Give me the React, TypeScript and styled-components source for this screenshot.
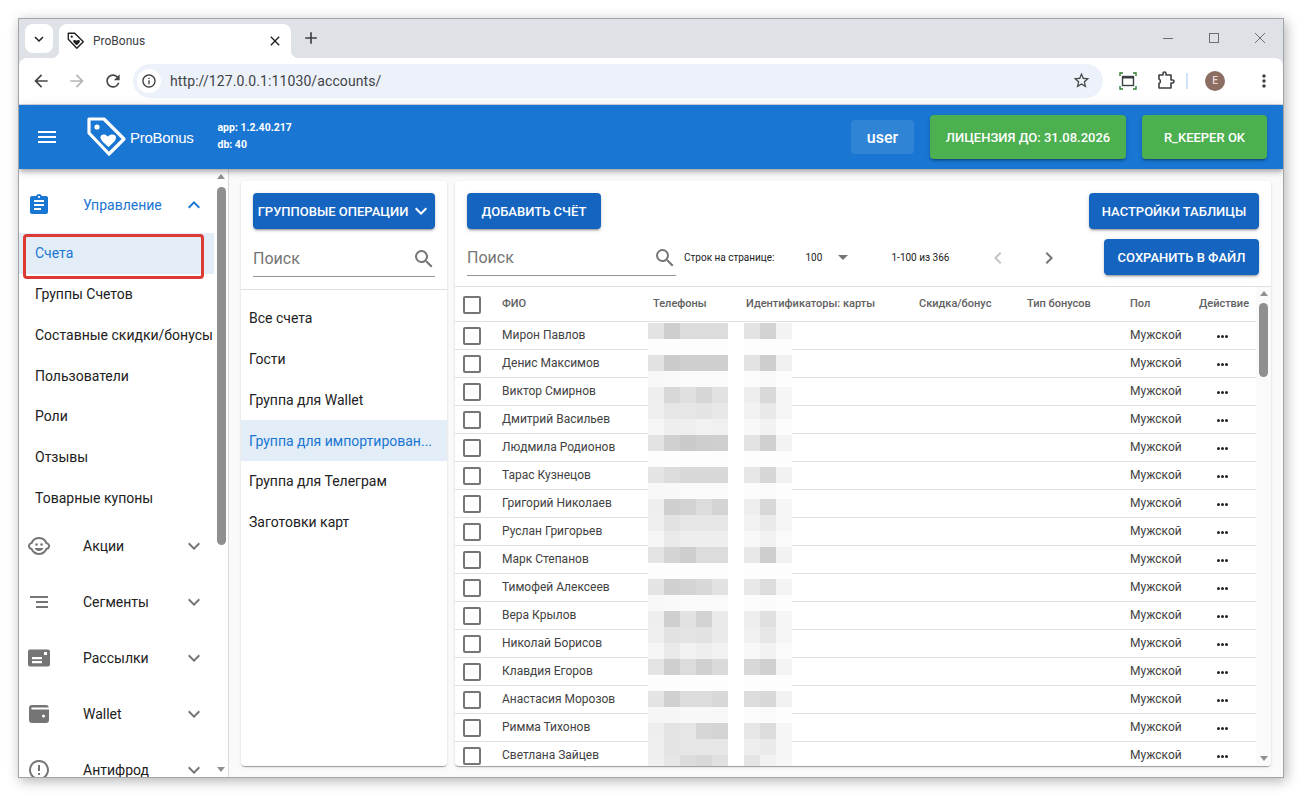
import React from 'react';
import styled, { createGlobalStyle } from 'styled-components';
import {
  MdAssignment, MdExpandLess, MdExpandMore, MdChildCare, MdSegment, MdErrorOutline,
  MdSearch, MdArrowDropDown, MdChevronLeft, MdChevronRight, MdMenu, MdRefresh,
  MdArrowBack, MdArrowForward, MdKeyboardArrowDown, MdClose, MdAdd, MdInfoOutline, MdStarBorder,
  MdMoreVert,
} from 'react-icons/md';

const GlobalStyle = createGlobalStyle`
  html, body { margin: 0; padding: 0; background: #fff; }
  body { font-family: Roboto, "Liberation Sans", Arial, sans-serif; overflow: hidden; }
  * { box-sizing: border-box; }
`;

const Page = styled.div`
  width: 1303px;
  height: 800px;
  padding: 18px 0 0 18px;
`;

const Window = styled.div`
  width: 1266px;
  height: 760px;
  border: 1px solid #a2a4a7;
  box-shadow: 2px 3px 12px rgba(0, 0, 0, 0.3);
  display: flex;
  flex-direction: column;
  overflow: hidden;
  background: #fff;
`;

/* browser frame */
const TabStrip = styled.div`
  height: 39px;
  flex: none;
  background: #dee1e6;
  display: flex;
  align-items: flex-start;
  padding: 5px 0 0 6px;
`;

const TabList = styled.div`
  width: 28px;
  height: 29px;
  background: #fff;
  border-radius: 8px;
  display: flex;
  align-items: center;
  justify-content: center;
  color: #1f1f1f;
  font-size: 18px;
`;

const Tab = styled.div`
  position: relative;
  width: 232px;
  height: 34px;
  margin-left: 6px;
  background: #fff;
  border-radius: 8px 8px 0 0;
  display: flex;
  align-items: center;
  padding: 0 8px;
  font-size: 12px;
  color: #3c4043;
  &::before, &::after {
    content: '';
    position: absolute;
    bottom: 0;
    width: 8px;
    height: 8px;
  }
  &::before { left: -8px; background: radial-gradient(circle at 0 0, transparent 8px, #fff 8.5px); }
  &::after { right: -8px; background: radial-gradient(circle at 100% 0, transparent 8px, #fff 8.5px); }
`;

const TabTitle = styled.span`
  flex: 1;
  margin-left: 8px;
`;

const NewTab = styled.div`
  margin-left: 8px;
  height: 28px;
  width: 24px;
  display: flex;
  align-items: center;
  justify-content: center;
  font-size: 20px;
  color: #3c4043;
`;

const WindowControls = styled.div`
  margin-left: auto;
  display: flex;
  align-items: center;
  height: 28px;
  margin-right: 0;
`;

const WinControl = styled.div`
  width: 46px;
  height: 28px;
  display: flex;
  align-items: center;
  justify-content: center;
`;

const Toolbar = styled.div`
  height: 47px;
  flex: none;
  background: #dee1e6;
`;

const ToolbarInner = styled.div`
  height: 47px;
  background: #fff;
  border-radius: 8px 8px 0 0;
  border-bottom: 1px solid #d6d8dc;
  display: flex;
  align-items: center;
  padding: 0 9px 1px 0;
`;

const NavButton = styled.div<{ $off?: boolean }>`
  width: 36px;
  height: 36px;
  display: flex;
  align-items: center;
  justify-content: center;
  font-size: 20px;
  color: ${p => (p.$off ? '#b3b5b8' : '#474747')};
`;

const NavButtons = styled.div`
  display: flex;
  padding-left: 4px;
`;

const Omnibox = styled.div`
  width: 970px;
  height: 34px;
  margin-left: 2px;
  background: #edf2fa;
  border-radius: 17px;
  display: flex;
  align-items: center;
  padding: 0 12px 0 4px;
  font-size: 14px;
  color: #3f4347;
  letter-spacing: 0.1px;
`;

const InfoDot = styled.div`
  width: 24px;
  height: 24px;
  border-radius: 50%;
  background: #fff;
  display: flex;
  align-items: center;
  justify-content: center;
  font-size: 16px;
  color: #3c4043;
  margin-right: 9px;
`;

const Star = styled.div`
  margin-left: auto;
  display: flex;
  font-size: 19px;
  color: #474747;
`;

const ToolbarIcons = styled.div`
  flex: 1;
  display: flex;
  align-items: center;
  padding-left: 14px;
`;

const ToolIcon = styled.svg`
  width: 22px;
  height: 22px;
  margin-right: 15px;
  flex: none;
`;

const ToolSep = styled.div`
  width: 2px;
  height: 16px;
  background: #d3e3fd;
  margin: 0 0 0 -5px;
`;

const Avatar = styled.div`
  width: 20px;
  height: 20px;
  border-radius: 50%;
  background: #8d6e63;
  color: #e8dcd8;
  font-size: 10px;
  font-weight: 500;
  display: flex;
  align-items: center;
  justify-content: center;
  margin-left: 17px;
`;

const MoreButton = styled.div`
  display: flex;
  font-size: 20px;
  color: #3c4043;
  margin-left: auto;
`;

/* app bar */
const AppBar = styled.header`
  position: relative;
  z-index: 2;
  height: 64px;
  flex: none;
  background: #1976d2;
  color: #fff;
  display: flex;
  align-items: center;
  padding: 0 16px 0 16px;
  box-shadow: 0 2px 4px -1px rgba(0,0,0,.2), 0 4px 5px 0 rgba(0,0,0,.14), 0 1px 10px 0 rgba(0,0,0,.12);
`;

const Burger = styled.div`
  display: flex;
  font-size: 24px;
`;

const LogoMark = styled.svg`
  width: 42px;
  height: 42px;
  margin-left: 27px;
  flex: none;
`;

const Brand = styled.div`
  font-family: "Liberation Sans", Arial, sans-serif;
  font-size: 15px;
  margin-left: 2px;
  letter-spacing: -0.3px;
`;

const Versions = styled.div`
  margin-left: 24px;
  font-size: 10.5px;
  font-weight: 700;
  line-height: 17px;
  margin-top: -2px;
`;

const UserBadge = styled.div`
  margin-left: auto;
  width: 63px;
  height: 34px;
  border-radius: 4px;
  background: rgba(255, 255, 255, 0.1);
  display: flex;
  align-items: center;
  justify-content: center;
  font-size: 16px;
  font-weight: 500;
`;

const GreenButton = styled.div<{ $w: number }>`
  width: ${p => p.$w}px;
  height: 44px;
  margin-left: 16px;
  border-radius: 4px;
  background: #4caf50;
  display: flex;
  align-items: center;
  justify-content: center;
  font-size: 13px;
  font-weight: 500;
  box-shadow: 0 3px 1px -2px rgba(0,0,0,.2), 0 2px 2px 0 rgba(0,0,0,.14), 0 1px 5px 0 rgba(0,0,0,.12);
`;

/* body */
const Body = styled.div`
  flex: 1;
  min-height: 0;
  display: flex;
  background: #fafafa;
`;

const Sidebar = styled.aside`
  width: 210px;
  flex: none;
  background: #fff;
  border-right: 1px solid #d9d9d9;
  display: flex;
  overflow: hidden;
`;

const NavList = styled.nav`
  flex: 1;
  min-width: 0;
  padding-top: 8px;
  overflow: hidden;
`;

const NavGroup = styled.div<{ $open?: boolean }>`
  height: 56px;
  display: flex;
  align-items: center;
  padding-left: 8px;
  font-size: 14px;
  color: ${p => (p.$open ? '#1976d2' : '#212121')};
`;

const NavIcon = styled.div<{ $open?: boolean }>`
  width: 24px;
  height: 24px;
  display: flex;
  font-size: 24px;
  color: ${p => (p.$open ? '#1976d2' : '#757575')};
  svg { width: 24px; height: 24px; }
`;

const NavLabel = styled.span`
  margin-left: 32px;
  flex: 1;
`;

const NavChevron = styled.div<{ $open?: boolean }>`
  display: flex;
  font-size: 24px;
  margin-right: 8px;
  color: ${p => (p.$open ? '#1976d2' : '#757575')};
`;

const NavItem = styled.div<{ $active?: boolean }>`
  position: relative;
  height: 40.75px;
  display: flex;
  align-items: center;
  padding-left: 16px;
  font-size: 14px;
  white-space: nowrap;
  color: ${p => (p.$active ? '#1976d2' : '#212121')};
  background: ${p => (p.$active ? '#e3edf7' : 'transparent')};
  ${p => p.$active && `
    &::after {
      content: '';
      position: absolute;
      left: 4px;
      top: 1px;
      width: 175px;
      height: 39px;
      border: 3px solid #dd3a33;
      border-radius: 4px;
    }
  `}
`;

const Rail = styled.div<{ $w: number; $bg?: string }>`
  width: ${p => p.$w}px;
  flex: none;
  position: relative;
  background: ${p => p.$bg || '#fff'};
  display: flex;
  flex-direction: column;
  align-items: center;
`;

const RailArrow = styled.div<{ $down?: boolean; $h: number }>`
  height: ${p => p.$h}px;
  width: 100%;
  flex: none;
  display: flex;
  align-items: ${p => (p.$down ? 'flex-start' : 'flex-end')};
  justify-content: center;
  &::before {
    content: '';
    border-left: 4.5px solid transparent;
    border-right: 4.5px solid transparent;
    ${p => (p.$down ? 'border-top' : 'border-bottom')}: 5px solid #909090;
  }
`;

const RailThumb = styled.div<{ $h: number; $mt: number }>`
  width: 9px;
  height: ${p => p.$h}px;
  margin-top: ${p => p.$mt}px;
  border-radius: 5px;
  background: #8f8f8f;
  flex: none;
`;

const RailFill = styled.div`
  flex: 1;
`;

const Content = styled.main`
  flex: 1;
  min-width: 0;
  display: flex;
  gap: 8px;
  padding: 12px 12px 11px 12px;
`;

const Panel = styled.section<{ $w?: number }>`
  ${p => (p.$w ? `width: ${p.$w}px; flex: none;` : 'flex: 1; min-width: 0;')}
  background: #fff;
  border-radius: 4px;
  box-shadow: 0 2px 1px -1px rgba(0,0,0,.2), 0 1px 1px 0 rgba(0,0,0,.14), 0 1px 3px 0 rgba(0,0,0,.12);
  display: flex;
  flex-direction: column;
  overflow: hidden;
`;

const GroupHead = styled.div`
  padding: 12px 12px 0;
  height: 109px;
  border-bottom: 1px solid #e0e0e0;
  flex: none;
`;

const BlueButton = styled.div<{ $w: number }>`
  width: ${p => p.$w}px;
  height: 36px;
  flex: none;
  border-radius: 4px;
  background: #1565c0;
  color: #fff;
  display: flex;
  align-items: center;
  justify-content: center;
  font-size: 13px;
  font-weight: 500;
  white-space: nowrap;
  box-shadow: 0 3px 1px -2px rgba(0,0,0,.2), 0 2px 2px 0 rgba(0,0,0,.14), 0 1px 5px 0 rgba(0,0,0,.12);
  svg { font-size: 24px; margin-left: 1px; margin-right: -3px; }
`;

const SearchField = styled.div<{ $w: number; $mt: number }>`
  width: ${p => p.$w}px;
  height: 36px;
  margin-top: ${p => p.$mt}px;
  flex: none;
  border-bottom: 1px solid #949494;
  display: flex;
  align-items: center;
  justify-content: space-between;
  font-size: 16px;
  color: #757575;
  svg { font-size: 24px; margin-right: -1px; }
`;

const GroupList = styled.div`
  padding-top: 8px;
`;

const GroupItem = styled.div<{ $active?: boolean }>`
  height: 40.75px;
  padding: 0 8px;
  display: flex;
  align-items: center;
  font-size: 14px;
  color: ${p => (p.$active ? '#1976d2' : '#212121')};
  background: ${p => (p.$active ? '#e3edf7' : 'transparent')};
`;

const TableHead = styled.div`
  flex: none;
  height: 106px;
  padding: 12px 12px 0;
  border-bottom: 1px solid #e0e0e0;
  display: flex;
  flex-direction: column;
`;

const HeadRow = styled.div`
  display: flex;
  align-items: flex-start;
  justify-content: space-between;
`;

const PagerRow = styled.div`
  display: flex;
  align-items: flex-start;
  margin-top: 11px;
`;

const PagerText = styled.span<{ $ml: number }>`
  font-size: 10px;
  color: #212121;
  margin-left: ${p => p.$ml}px;
  line-height: 35px;
  white-space: nowrap;
`;

const PageSelect = styled.div`
  width: 51px;
  height: 34px;
  margin-left: 31px;
  display: flex;
  align-items: center;
  justify-content: space-between;
  font-size: 10px;
  color: #212121;
  svg { font-size: 24px; color: #757575; margin-right: 2px; }
`;

const PagerArrow = styled.div<{ $off?: boolean; $ml: number }>`
  display: flex;
  font-size: 24px;
  margin-left: ${p => p.$ml}px;
  margin-top: 6px;
  color: ${p => (p.$off ? '#c4c4c4' : '#757575')};
`;

const PushRight = styled.div`
  margin-left: auto;
  margin-top: -1px;
`;

const TableWrap = styled.div`
  flex: 1;
  min-height: 0;
  display: flex;
  overflow: hidden;
`;

const Table = styled.div`
  position: relative;
  flex: 1;
  min-width: 0;
  overflow: hidden;
`;

const Row = styled.div<{ $head?: boolean }>`
  display: grid;
  grid-template-columns: 47px 151px 93px 173px 108px 103px 69px 1fr;
  align-items: center;
  height: ${p => (p.$head ? '35px' : '28px')};
  border-bottom: 1px solid #e0e0e0;
`;

const Check = styled.div`
  width: 18px;
  height: 18px;
  margin-left: 8px;
  border: 2px solid #757575;
  border-radius: 2px;
  background: #fff;
  margin-top: 1px;
`;

const HeadCell = styled.div`
  font-size: 11px;
  font-weight: 500;
  color: #616161;
  white-space: nowrap;
  padding-bottom: 2px;
`;

const Cell = styled.div`
  font-size: 12px;
  color: #424242;
  white-space: nowrap;
  margin-top: -1px;
`;

const Dots = styled.div`
  display: flex;
  gap: 1px;
  justify-content: flex-start;
  margin-left: 18px;
  margin-top: 2px;
`;

const Dot = styled.i`
  width: 3px;
  height: 3px;
  border-radius: 50%;
  background: #212121;
`;

const Mosaic = styled.svg`
  position: absolute;
  left: 193px;
  top: 36px;
  display: block;
`;

const shades = [
  'e3cddcdcdc.e3d3f3', 'fdfdfdfdfd.fdfdfd', 'e2cbcfcfcf.e3cdf0', 'f8f9fbfbfb.fcf9fd',
  'eed8e0d6e2.eed9f6', 'efe6e6e4e8.f2e9f6', 'f6eeeff2f0.f8f2fc', 'e3d0cacdcf.e3d0f3',
  'fdfdfdfdfd.fdfdfd', 'e4dcd8d8d8.e6d6f2', 'f8f8fafafa.fcfafd', 'eecfd2dcd4.eed8f6',
  'efe2e6e6e6.f2eaf6', 'f6eaeeeeee.f8f2fa', 'e4d4cedcdc.e8cef2', 'fdfdfdfdfd.fdfdfd',
  'e4d0d4d8e2.e8dcf4', 'f8f9fafafa.fcfafd', 'eecfe2d2ea.eee0f6', 'efe2e4e2ea.f0e6f6',
  'f6eaf2eef2.f8f2fa', 'e4cfdcd0da.d8d0f4', 'fdfdfdfdfd.fdfdfd', 'e4d0dcdcd8.dcd8f2',
  'f6f6f8f8f8.fcfafd', 'eee4e6d6d4.e6dcf6', 'efe4e6e6e6.eeeaf6', 'f0e6dcd8e0.e4f2f6',
];

const Redaction = () => (
  <Mosaic width={144} height={448} shapeRendering="crispEdges">
    <rect width={144} height={448} fill="#fff" />
    {shades.map((line, y) => {
      const [left, right] = line.split('.');
      const cells: React.ReactNode[] = [];
      for (let i = 0; i < 5; i++) {
        cells.push(<rect key={`l${i}`} x={i * 16} y={y * 16} width={16} height={16} fill={`#${left.slice(i * 2, i * 2 + 2).repeat(3)}`} />);
      }
      for (let i = 0; i < 3; i++) {
        cells.push(<rect key={`r${i}`} x={96 + i * 16} y={y * 16} width={16} height={16} fill={`#${right.slice(i * 2, i * 2 + 2).repeat(3)}`} />);
      }
      return <g key={y}>{cells}</g>;
    })}
  </Mosaic>
);

const MailIcon = () => (
  <svg viewBox="0 0 24 24">
    <path fill="currentColor" fillRule="evenodd" d="M3 3.5h18a2 2 0 0 1 2 2v13a2 2 0 0 1-2 2H3a2 2 0 0 1-2-2v-13a2 2 0 0 1 2-2zM5 11v2.2h10V11zM5 15v2.2h10V15zM17 6v3h3V6z" />
  </svg>
);

const WalletIcon = () => (
  <svg viewBox="0 0 24 24">
    <path fill="currentColor" fillRule="evenodd" d="M5 3h14a3 3 0 0 1 2.9 2.4H5a1.2 1.2 0 0 0 0 2.2h17V18a3 3 0 0 1-3 3H5a3 3 0 0 1-3-3V6a3 3 0 0 1 3-3zm11.5 9.5a1.5 1.5 0 1 0 0 3 1.5 1.5 0 0 0 0-3z" />
  </svg>
);

const TagHeart = ({ stroke }: { stroke: string }) => (
  <>
    <path d="M3 3 H18 L38 23 L23 38 L3 17 Z" fill="none" stroke={stroke} strokeWidth={3.2} strokeLinejoin="round" />
    <circle cx={11} cy={11} r={2.6} fill={stroke} />
    <path d="M22.5 31 C17 26 14.5 24 14.5 21 C14.5 18.4 18.5 17 22 20.5 C25.5 17 30 18.6 30 21.5 C30 24.5 27.5 26.5 22.5 31 Z" fill={stroke} />
  </>
);

const sections = ['Счета', 'Группы Счетов', 'Составные скидки/бонусы', 'Пользователи', 'Роли', 'Отзывы', 'Товарные купоны'];

const menuGroups = [
  { label: 'Акции', icon: <MdChildCare /> },
  { label: 'Сегменты', icon: <MdSegment /> },
  { label: 'Рассылки', icon: <MailIcon /> },
  { label: 'Wallet', icon: <WalletIcon /> },
  { label: 'Антифрод', icon: <MdErrorOutline /> },
];

const accountGroups = ['Все счета', 'Гости', 'Группа для Wallet', 'Группа для импортирован...', 'Группа для Телеграм', 'Заготовки карт'];

const columns = ['ФИО', 'Телефоны', 'Идентификаторы: карты', 'Скидка/бонус', 'Тип бонусов', 'Пол', 'Действие'];

const people = [
  'Мирон Павлов', 'Денис Максимов', 'Виктор Смирнов', 'Дмитрий Васильев', 'Людмила Родионов', 'Тарас Кузнецов',
  'Григорий Николаев', 'Руслан Григорьев', 'Марк Степанов', 'Тимофей Алексеев', 'Вера Крылов', 'Николай Борисов',
  'Клавдия Егоров', 'Анастасия Морозов', 'Римма Тихонов', 'Светлана Зайцев',
];

const App = () => (
  <>
    <GlobalStyle />
    <Page>
      <Window>
        <TabStrip>
          <TabList><MdKeyboardArrowDown /></TabList>
          <Tab>
            <svg width={18} height={18} viewBox="0 0 42 42"><TagHeart stroke="#1f1f1f" /></svg>
            <TabTitle>ProBonus</TabTitle>
            <MdClose size={16} color="#1f1f1f" />
          </Tab>
          <NewTab><MdAdd /></NewTab>
          <WindowControls>
            <WinControl>
              <svg width={12} height={12}><path d="M1 6.5h10" stroke="#6b6e72" /></svg>
            </WinControl>
            <WinControl>
              <svg width={12} height={12}><rect x={1.5} y={1.5} width={9} height={9} fill="none" stroke="#6b6e72" /></svg>
            </WinControl>
            <WinControl>
              <svg width={12} height={12}><path d="M1 1l10 10M11 1L1 11" stroke="#6b6e72" /></svg>
            </WinControl>
          </WindowControls>
        </TabStrip>
        <Toolbar>
          <ToolbarInner>
            <NavButtons>
              <NavButton><MdArrowBack /></NavButton>
              <NavButton $off><MdArrowForward /></NavButton>
              <NavButton><MdRefresh /></NavButton>
            </NavButtons>
            <Omnibox>
              <InfoDot><MdInfoOutline /></InfoDot>
              http://127.0.0.1:11030/accounts/
              <Star><MdStarBorder /></Star>
            </Omnibox>
            <ToolbarIcons>
              <ToolIcon viewBox="0 0 22 22">
                <path d="M3 6V3h3M16 3h3v3M19 16v3h-3M6 19H3v-3" fill="none" stroke="#2e7d32" strokeWidth={1.4} />
                <rect x={5.5} y={6.5} width={11} height={9} fill="none" stroke="#3c4043" strokeWidth={1.4} />
                <path d="M5.5 7.5h11" stroke="#3c4043" strokeWidth={2} />
              </ToolIcon>
              <ToolIcon viewBox="0 0 22 22">
                <path d="M5 5h4V3.5a1.5 1.5 0 0 1 3 0V5h5v5h1.5a1.5 1.5 0 0 1 0 3H17v5H5v-4.5a2.5 2.5 0 0 0 0-4.5z" fill="none" stroke="#3c4043" strokeWidth={1.6} strokeLinejoin="round" />
              </ToolIcon>
              <ToolSep />
              <Avatar>E</Avatar>
              <MoreButton><MdMoreVert /></MoreButton>
            </ToolbarIcons>
          </ToolbarInner>
        </Toolbar>

        <AppBar>
          <Burger><MdMenu /></Burger>
          <LogoMark viewBox="0 0 42 42"><TagHeart stroke="#fff" /></LogoMark>
          <Brand>ProBonus</Brand>
          <Versions>
            <div>app: 1.2.40.217</div>
            <div>db: 40</div>
          </Versions>
          <UserBadge>user</UserBadge>
          <GreenButton $w={196}>ЛИЦЕНЗИЯ ДО: 31.08.2026</GreenButton>
          <GreenButton $w={125}>R_KEEPER OK</GreenButton>
        </AppBar>

        <Body>
          <Sidebar>
            <NavList>
              <NavGroup $open>
                <NavIcon $open><MdAssignment /></NavIcon>
                <NavLabel>Управление</NavLabel>
                <NavChevron $open><MdExpandLess /></NavChevron>
              </NavGroup>
              {sections.map((s, i) => (
                <NavItem key={s} $active={i === 0}>{s}</NavItem>
              ))}
              {menuGroups.map(g => (
                <NavGroup key={g.label}>
                  <NavIcon>{g.icon}</NavIcon>
                  <NavLabel>{g.label}</NavLabel>
                  <NavChevron><MdExpandMore /></NavChevron>
                </NavGroup>
              ))}
            </NavList>
            <Rail $w={14}>
              <RailArrow $h={10} />
              <RailThumb $h={358} $mt={8} />
              <RailFill />
              <RailArrow $down $h={10} />
            </Rail>
          </Sidebar>

          <Content>
            <Panel $w={206}>
              <GroupHead>
                <BlueButton $w={182}>ГРУППОВЫЕ ОПЕРАЦИИ<MdExpandMore /></BlueButton>
                <SearchField $w={182} $mt={12}>Поиск<MdSearch /></SearchField>
              </GroupHead>
              <GroupList>
                {accountGroups.map((g, i) => (
                  <GroupItem key={g} $active={i === 3}>{g}</GroupItem>
                ))}
              </GroupList>
            </Panel>

            <Panel>
              <TableHead>
                <HeadRow>
                  <BlueButton $w={134}>ДОБАВИТЬ СЧЁТ</BlueButton>
                  <BlueButton $w={170}>НАСТРОЙКИ ТАБЛИЦЫ</BlueButton>
                </HeadRow>
                <PagerRow>
                  <SearchField $w={209} $mt={0}>Поиск<MdSearch /></SearchField>
                  <PagerText $ml={8}>Строк на странице:</PagerText>
                  <PageSelect>100<MdArrowDropDown /></PageSelect>
                  <PagerText $ml={35}>1-100 из 366</PagerText>
                  <PagerArrow $off $ml={37}><MdChevronLeft /></PagerArrow>
                  <PagerArrow $ml={27}><MdChevronRight /></PagerArrow>
                  <PushRight><BlueButton $w={155}>СОХРАНИТЬ В ФАЙЛ</BlueButton></PushRight>
                </PagerRow>
              </TableHead>
              <TableWrap>
                <Table>
                  <Row $head>
                    <Check />
                    {columns.map(c => <HeadCell key={c}>{c}</HeadCell>)}
                  </Row>
                  {people.map(name => (
                    <Row key={name}>
                      <Check />
                      <Cell>{name}</Cell>
                      <Cell />
                      <Cell />
                      <Cell />
                      <Cell />
                      <Cell>Мужской</Cell>
                      <Dots><Dot /><Dot /><Dot /></Dots>
                    </Row>
                  ))}
                  <Redaction />
                </Table>
                <Rail $w={15} $bg="#fafafa">
                  <RailArrow $h={9} />
                  <RailThumb $h={74} $mt={7} />
                  <RailFill />
                  <RailArrow $down $h={10} />
                </Rail>
              </TableWrap>
            </Panel>
          </Content>
        </Body>
      </Window>
    </Page>
  </>
);

export default App;
